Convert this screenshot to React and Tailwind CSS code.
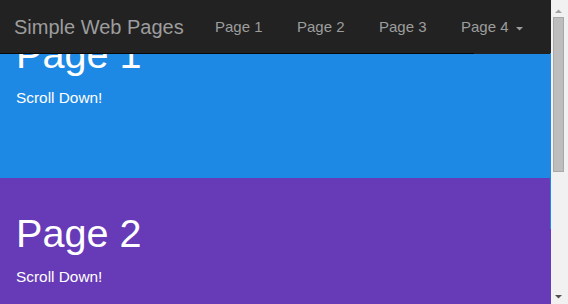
import React from "react";

function Caret({ className }) {
  return (
    <svg width="8" height="4" viewBox="0 0 8 4" className={className}>
      <polygon points="0,0 7,0 3.5,3.6" fill="currentColor" />
    </svg>
  );
}

export default function App() {
  const links = ["Page 1", "Page 2", "Page 3"];
  return (
    <div className="flex h-[304px] w-[568px] overflow-hidden font-['Liberation_Sans',Arial,sans-serif]">
      <div className="relative flex w-[551px] flex-col">
        <nav className="absolute left-0 right-0 top-0 z-10 flex flex-col">
          <div className="flex h-[53px] items-start bg-[#222222] pt-[17px] text-[#9d9d9d]">
            <div className="w-[198px] pl-[14px] text-[20px] leading-[20px]">Simple Web Pages</div>
            {links.map((l) => (
              <div key={l} className="w-[82px] pl-[17px] text-[15px] leading-[20px]">
                {l}
              </div>
            ))}
            <div className="flex w-[82px] items-center pl-[17px] text-[15px] leading-[20px]">
              <span>Page 4</span>
              <Caret className="ml-[7px] mt-[3px]" />
            </div>
          </div>
          <div className="flex h-px">
            <div className="w-[474px] bg-[#080808]" />
            <div className="flex-1 bg-[#222222]" />
            <div className="w-px bg-[#1e88e5]" />
          </div>
        </nav>
        <section className="h-[178px] bg-[#1e88e5] px-[16px] pt-[32px] text-white">
          <h1 className="text-[39.6px] font-normal leading-[44px]">Page 1</h1>
          <p className="mt-[11px] text-[15.4px] leading-[21px]">Scroll Down!</p>
        </section>
        <section className="relative flex-1 bg-[#673ab7] px-[16px] pt-[33px] text-white">
          <div className="absolute right-0 top-0 h-[51px] w-px bg-[#1e88e5]" />
          <h1 className="text-[39.6px] font-normal leading-[44px]">Page 2</h1>
          <p className="mt-[11px] text-[15.4px] leading-[21px]">Scroll Down!</p>
        </section>
      </div>
      <div className="flex w-[17px] flex-col bg-[#f1f1f1]">
        <div className="h-[17px] pl-[4px] pt-[9px] text-[#a3a3a3]">
          <svg width="8" height="4" viewBox="0 0 8 4">
            <polygon points="0,4 7,4 3.5,0.4" fill="currentColor" />
          </svg>
        </div>
        <div className="ml-[2px] h-[155px] w-[11px] border border-[#a9a9a9] bg-[#bdbdbd]" />
        <div className="mb-[5px] mt-auto pl-[4px] text-[#505050]">
          <Caret />
        </div>
      </div>
    </div>
  );
}
